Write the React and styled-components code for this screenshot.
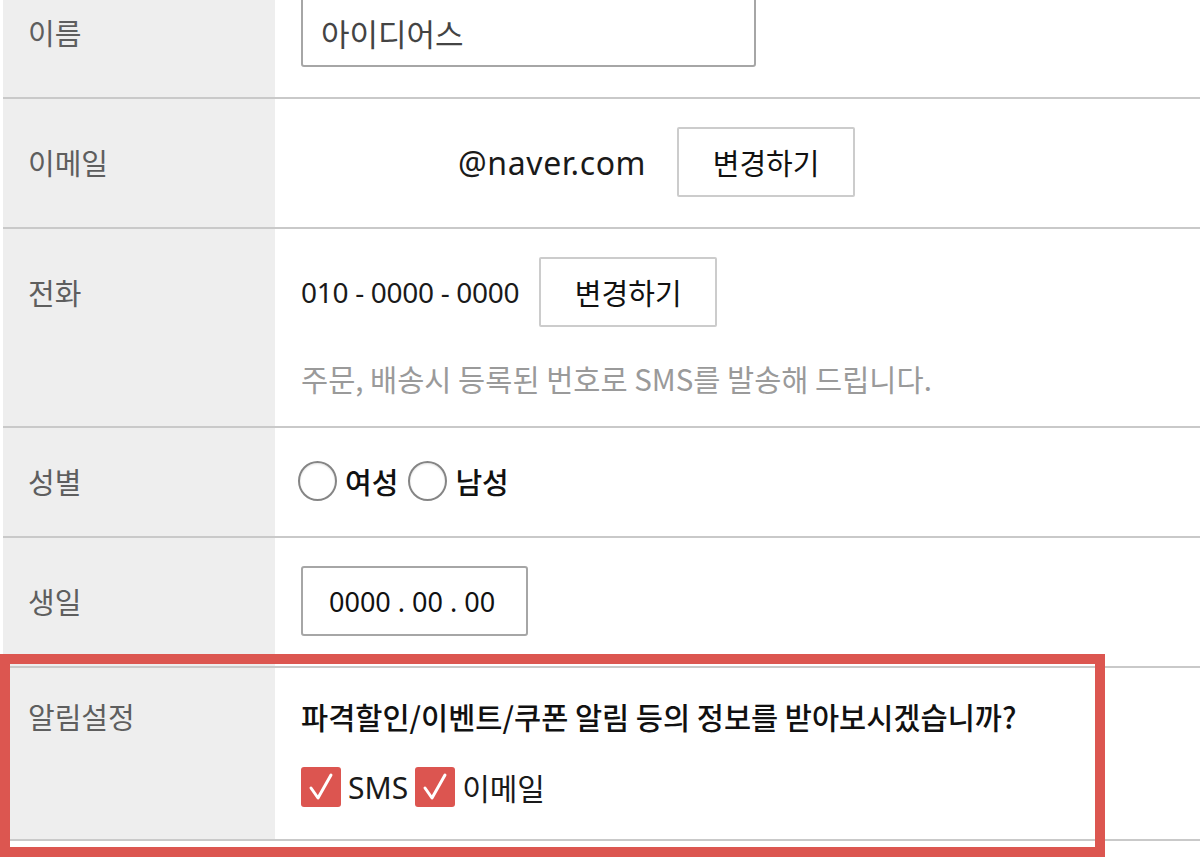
import React from "react"
import styled, { createGlobalStyle } from "styled-components"

const GlobalStyle = createGlobalStyle`
  html, body {
    margin: 0;
    padding: 0;
    background: #fff;
  }
  body {
    font-family: "Noto Sans CJK KR", "Noto Sans", sans-serif;
    color: #222;
  }
`

const latin = `"Noto Sans", "Noto Sans CJK KR", sans-serif`

const Page = styled.div`
  position: relative;
  width: 1200px;
  height: 857px;
  overflow: hidden;
`

const Table = styled.div`
  margin: -31px 0 0 3px;
`

const Row = styled.div`
  display: grid;
  grid-template-columns: 272px 1fr;
  border-bottom: 2px solid #c9c9c9;
`

const Label = styled.div`
  background: #eeeeee;
  padding: 28px 0 0 25px;
  font-size: 29px;
  line-height: ${(p) => p.$h}px;
  color: #5e5e5e;
`

const Cell = styled.div`
  padding: 28px 0 30px 26px;
  display: flex;
  flex-direction: column;
  align-items: flex-start;
  gap: ${(p) => p.$gap || 0}px;
`

const Line = styled.div`
  display: flex;
  align-items: center;
  gap: ${(p) => p.$gap || 0}px;
  height: ${(p) => p.$h}px;
`

const TextInput = styled.div`
  box-sizing: border-box;
  width: ${(p) => p.$w}px;
  height: 70px;
  border: 2px solid #a6a6a6;
  border-radius: 3px;
  display: flex;
  align-items: center;
  padding-left: ${(p) => p.$pad}px;
  font-family: ${(p) => (p.$latin ? latin : "inherit")};
  font-size: ${(p) => p.$size}px;
  color: ${(p) => p.$color};
  letter-spacing: ${(p) => p.$ls || 0}px;
`

const Value = styled.span`
  font-family: ${latin};
  font-size: ${(p) => p.$size}px;
  color: #1a1a1a;
  margin-left: ${(p) => p.$offset || 0}px;
  letter-spacing: ${(p) => p.$ls || 0}px;
`

const Button = styled.button`
  box-sizing: border-box;
  width: 178px;
  height: 70px;
  background: #fff;
  border: 2px solid #cccccc;
  border-radius: 2px;
  font-family: inherit;
  font-size: 29px;
  color: #111;
  padding: 0;
`

const Help = styled.p`
  margin: 0;
  font-size: 29.5px;
  line-height: 36px;
  color: #9a9a9a;
`

const Radio = styled.span`
  box-sizing: border-box;
  width: 39px;
  height: 40px;
  border-radius: 50%;
  border: 2px solid #858585;
  background: #fff;
  box-shadow: inset 0 1px 2px rgba(0, 0, 0, 0.12);
`

const Gender = styled(Line)`
  margin-left: -3px;
`

const Choice = styled.span`
  font-size: 29px;
  font-weight: 500;
  color: #111;
  margin: 0 10px 0 8px;
`

const Question = styled.span`
  font-size: 29.5px;
  font-weight: 500;
  line-height: 40px;
  color: #111;
`

const Check = styled.span`
  width: 40px;
  height: 40px;
  border-radius: 3px;
  background: #dc5550;
  display: flex;
  align-items: center;
  justify-content: center;
`

const CheckText = styled.span`
  font-family: ${latin};
  font-size: 30px;
  color: #1a1a1a;
  margin: 0 7px 0 7px;
`

const Highlight = styled.div`
  position: absolute;
  left: 0;
  top: 654px;
  width: 1105px;
  height: 203px;
  box-sizing: border-box;
  border: 10px solid #dc5650;
  pointer-events: none;
`

const CheckMark = () => (
  <svg width="30" height="32" viewBox="0 0 30 32" fill="none">
    <path
      d="M5 17 L12 27 L25 4"
      stroke="#fff"
      strokeWidth="3"
      strokeLinecap="round"
      strokeLinejoin="round"
    />
  </svg>
)

export default function App() {
  return (
    <Page>
      <GlobalStyle />
      <Table>
        <Row>
          <Label $h={70}>이름</Label>
          <Cell>
            <TextInput $w={455} $pad={18} $size={31} $color="#444">
              아이디어스
            </TextInput>
          </Cell>
        </Row>
        <Row>
          <Label $h={70}>이메일</Label>
          <Cell>
            <Line $h={70} $gap={31}>
              <Value $offset={157} $size={32} $ls={0.6}>
                @naver.com
              </Value>
              <Button>변경하기</Button>
            </Line>
          </Cell>
        </Row>
        <Row>
          <Label $h={70}>전화</Label>
          <Cell $gap={33}>
            <Line $h={70} $gap={20}>
              <Value $size={28} $ls={-0.3}>
                010 - 0000 - 0000
              </Value>
              <Button>변경하기</Button>
            </Line>
            <Help>주문, 배송시 등록된 번호로 SMS를 발송해 드립니다.</Help>
          </Cell>
        </Row>
        <Row>
          <Label $h={50}>성별</Label>
          <Cell>
            <Gender $h={50}>
              <Radio />
              <Choice>여성</Choice>
              <Radio />
              <Choice>남성</Choice>
            </Gender>
          </Cell>
        </Row>
        <Row>
          <Label $h={70}>생일</Label>
          <Cell>
            <TextInput $w={227} $pad={26} $size={27} $color="#111" $latin>
              0000 . 00 . 00
            </TextInput>
          </Cell>
        </Row>
        <Row>
          <Label $h={40}>알림설정</Label>
          <Cell $gap={29}>
            <Question>파격할인/이벤트/쿠폰 알림 등의 정보를 받아보시겠습니까?</Question>
            <Line $h={44}>
              <Check>
                <CheckMark />
              </Check>
              <CheckText>SMS</CheckText>
              <Check>
                <CheckMark />
              </Check>
              <CheckText>이메일</CheckText>
            </Line>
          </Cell>
        </Row>
      </Table>
      <Highlight />
    </Page>
  )
}
